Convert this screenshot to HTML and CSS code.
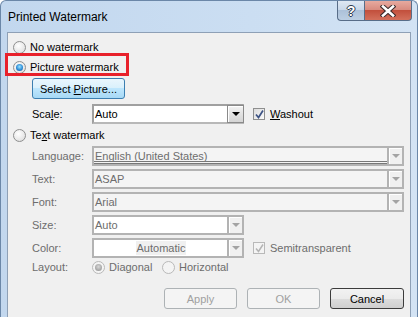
FILE: index.html
```html
<!DOCTYPE html>
<html lang="en">
<head>
  <meta charset="UTF-8">
  <title>Printed Watermark</title>
  <link rel="stylesheet" href="styles.css">
</head>
<body>
  <div class="window">
    <div class="titlebar">
      <span class="title">Printed Watermark</span>
      <div class="caption-buttons">
        <span class="cap-btn help">?</span>
        <span class="cap-btn close">
          <svg width="16" height="12" viewBox="0 0 16 12">
            <path d="M3 1.5 L13 10.5 M13 1.5 L3 10.5" stroke="#3a2a2a" stroke-width="4.6" stroke-linecap="square"/>
            <path d="M3 1.5 L13 10.5 M13 1.5 L3 10.5" stroke="#ffffff" stroke-width="2.6" stroke-linecap="square"/>
          </svg>
        </span>
      </div>
    </div>

    <div class="client">
      <div class="option">
        <span class="radio"></span>
        <span>No watermark</span>
      </div>
      <div class="option opt-picture">
        <span class="radio checked"></span>
        <span>Picture watermark</span>
      </div>

      <div class="indent">
        <div class="btn select-btn"><span>Select <u>P</u>icture...</span></div>
        <div class="scale-row">
          <span class="label">Sca<u>l</u>e:</span>
          <div class="combo active scale-combo">
            <span class="value">Auto</span>
            <span class="arrow"><i class="tri"></i></span>
          </div>
          <span class="check on"><svg width="9" height="9" viewBox="0 0 9 9"><path d="M1 4.5 L3.5 7.5 L8 0.5" fill="none" stroke="#3d5384" stroke-width="1.7"/></svg></span>
          <span class="check-text"><u>W</u>ashout</span>
        </div>
      </div>

      <div class="option opt-text">
        <span class="radio"></span>
        <span>Te<u>x</u>t watermark</span>
      </div>

      <div class="indent">
        <div class="fields">
          <span class="label dim">Language:</span>
          <div class="combo off lang">
            <span class="value">English (United States)</span>
            <span class="arrow"><i class="tri"></i></span>
          </div>

          <span class="label dim">Text:</span>
          <div class="combo off">
            <span class="value">ASAP</span>
            <span class="arrow"><i class="tri"></i></span>
          </div>

          <span class="label dim">Font:</span>
          <div class="combo off">
            <span class="value">Arial</span>
            <span class="arrow"><i class="tri"></i></span>
          </div>

          <span class="label dim">Size:</span>
          <div class="combo off short white">
            <span class="value">Auto</span>
            <span class="arrow"><i class="tri"></i></span>
          </div>

          <span class="label dim">Color:</span>
          <div class="color-row">
            <div class="combo off short white">
              <span class="value centered"><span class="auto-hl">Automatic</span></span>
              <span class="arrow"><i class="tri"></i></span>
            </div>
            <span class="check dis"><svg width="9" height="9" viewBox="0 0 9 9"><path d="M1 4.5 L3.5 7.5 L8 0.5" fill="none" stroke="#b4b4b4" stroke-width="1.5"/></svg></span>
            <span class="check-text dim">Semitransparent</span>
          </div>

          <span class="label dim layout-label">Layout:</span>
          <div class="layout-row">
            <div class="option diag dim">
              <span class="radio dis checked"></span>
              <span>Diagonal</span>
            </div>
            <div class="option dim">
              <span class="radio dis"></span>
              <span>Horizontal</span>
            </div>
          </div>
        </div>
      </div>

      <div class="actions">
        <div class="btn disabled">Apply</div>
        <div class="btn disabled">OK</div>
        <div class="btn default">Cancel</div>
      </div>
    </div>

    <div class="highlight"></div>
  </div>
</body>
</html>
```

FILE: styles.css
```css
body {
  margin: 0;
  width: 418px;
  height: 317px;
  overflow: hidden;
  font-family: 'Liberation Sans', Arial, sans-serif;
  font-size: 11px;
  color: #000;
  background: #ffffff;
}

u {
  text-decoration: underline;
  text-underline-offset: 1px;
}

.window {
  position: relative;
  box-sizing: border-box;
  display: flex;
  flex-direction: column;
  height: 317px;
  padding: 0 6px;
  border: 1px solid #6b87a8;
  border-bottom: none;
  border-radius: 6px 6px 0 0;
  background: linear-gradient(to right, #c2d7ee, #cbdef2 60%, #d3e3f4);
}

.titlebar {
  display: flex;
  align-items: flex-start;
  height: 31px;
  flex-shrink: 0;
}

.title {
  padding: 9px 0 0 1px;
  font-size: 12px;
  line-height: 14px;
  color: #000;
}

.caption-buttons {
  display: flex;
  margin-left: auto;
  margin-right: -1px;
}

.cap-btn {
  display: flex;
  align-items: center;
  justify-content: center;
  height: 19px;
  border: 1px solid #586d88;
  border-top: none;
}

.help {
  width: 26px;
  border-right: none;
  border-radius: 0 0 0 4px;
  background: linear-gradient(#dfe8f3, #c9d8ea 45%, #acc1d9 50%, #bccfe3);
  color: #fff;
  font-weight: bold;
  font-size: 14px;
  text-shadow: 1px 0 0 #2e3a4c, -1px 0 0 #2e3a4c, 0 1px 0 #2e3a4c, 0 -1px 0 #2e3a4c;
}

.close {
  width: 46px;
  border-radius: 0 0 4px 0;
  background: linear-gradient(#e7aa9f, #d98c80 45%, #c2503d 50%, #d3705c);
}

.client {
  flex: 1;
  padding: 8px 6px 0 5px;
  background: #f0f0f0;
  border: 1px solid #8ea0b6;
  border-bottom: none;
}

.option {
  display: flex;
  align-items: center;
  gap: 4px;
  height: 13px;
  line-height: 13px;
}

.opt-picture {
  margin-top: 7px;
}

.opt-text {
  margin-top: 5px;
}

.radio {
  box-sizing: border-box;
  width: 13px;
  height: 13px;
  border-radius: 50%;
  border: 1px solid #8e8f8f;
  background: radial-gradient(circle at 40% 35%, #ffffff, #e4e4e4 70%, #cfcfcf);
  position: relative;
}

.radio.checked::after {
  content: "";
  position: absolute;
  left: 2px;
  top: 2px;
  width: 7px;
  height: 7px;
  border-radius: 50%;
  background: radial-gradient(circle at 50% 40%, #9be4ff, #2f8ed8 55%, #14508e);
}

.radio.dis {
  border-color: #b9b9b9;
  background: #f4f4f4;
}

.radio.dis.checked::after {
  background: radial-gradient(circle at 50% 40%, #d8d8d8, #a9a9a9 60%, #8c8c8c);
}

.indent {
  padding-left: 19px;
}

.btn {
  box-sizing: border-box;
  display: flex;
  align-items: center;
  justify-content: center;
  width: 73px;
  height: 21px;
  border: 1px solid #707070;
  border-radius: 3px;
  background: linear-gradient(#f2f2f2, #ebebeb 50%, #dddddd 50%, #cfcfcf);
}

.select-btn {
  width: 93px;
  margin-top: 4px;
  border-color: #3c7fb1;
  background: linear-gradient(#eaf6fd, #d9f0fc 50%, #bee6fd 50%, #a7d9f5);
}

.scale-row {
  display: flex;
  align-items: center;
  height: 20px;
  margin-top: 5px;
}

.label {
  width: 60px;
  flex-shrink: 0;
}

.dim {
  color: #6d6d6d;
}

.combo {
  box-sizing: border-box;
  display: flex;
  height: 20px;
  border: 2px solid #b3b3b3;
  background: #f4f4f4;
}

.combo .value {
  flex: 1;
  padding-left: 1px;
  line-height: 16px;
  white-space: nowrap;
  overflow: hidden;
}

.combo .arrow {
  box-sizing: border-box;
  display: flex;
  align-items: center;
  justify-content: center;
  width: 17px;
  margin: -2px -2px -2px 0;
  border: 2px solid #b3b3b3;
  background: #f0f0f0;
  box-shadow: inset 1px 1px 0 #fff;
}

.tri {
  width: 0;
  height: 0;
  border-left: 4px solid transparent;
  border-right: 4px solid transparent;
  border-top: 4px solid #a3a3a3;
}

.combo.off .value {
  color: #6d6d6d;
}

.combo.white {
  background: #ffffff;
}

.scale-combo {
  width: 152px;
  background: #ffffff;
  border-color: #a0a0a0 #b8b8b8 #b8b8b8 #a0a0a0;
}

.scale-combo .arrow {
  border: 1px solid #8a8a8a;
  margin: -1px -2px -1px 0;
  background: linear-gradient(#f3f3f3, #e2e2e2 50%, #d4d4d4);
}

.scale-combo .tri {
  border-top-color: #000;
}

.lang .value {
  border-bottom: 3px double #777;
  height: 13px;
}

.short {
  width: 152px;
}

.centered {
  text-align: center;
}

.auto-hl {
  padding: 1px 1px;
  background: #f0f0f0;
}

.check {
  box-sizing: border-box;
  display: flex;
  align-items: center;
  justify-content: center;
  width: 12px;
  height: 12px;
  margin-left: 9px;
  border: 1px solid #8e8f8f;
  background: linear-gradient(135deg, #dcdcdc, #fafafa);
}

.check.dis {
  border-color: #b9b9b9;
  background: #f4f4f4;
}

.check-text {
  margin-left: 5px;
}

.fields {
  display: grid;
  grid-template-columns: 60px 1fr;
  row-gap: 3px;
  align-items: center;
  margin-top: 4px;
}

.color-row {
  display: flex;
  align-items: center;
}

.layout-row {
  display: flex;
  align-items: center;
  height: 13px;
}

.layout-label {
  line-height: 13px;
}

.diag {
  width: 70px;
}

.actions {
  display: flex;
  justify-content: flex-end;
  gap: 10px;
  margin-top: 14px;
}

.btn.disabled {
  color: #a0a0a0;
  border-color: #adb2b5;
  background: #f4f4f4;
}

.btn.default {
  width: 74px;
  border-color: #3c3c3c;
}

.highlight {
  position: absolute;
  left: 4px;
  top: 52px;
  width: 118px;
  height: 17px;
  border: 3px solid #e8212b;
}
```
